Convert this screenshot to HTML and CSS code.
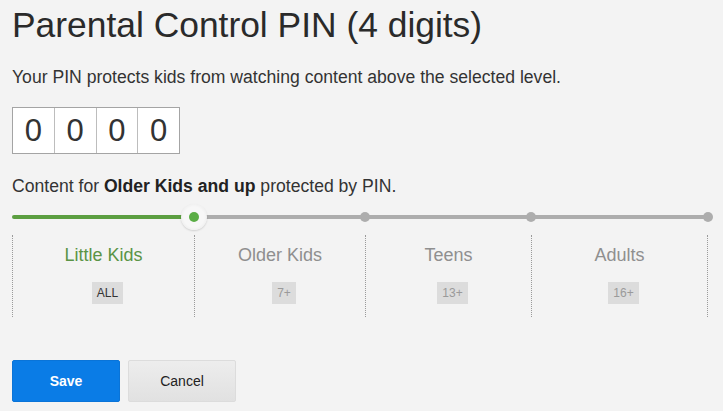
FILE: index.html
```html
<!DOCTYPE html>
<html lang="en">
<head>
	<meta charset="UTF-8">
	<title>Parental Control PIN</title>
	<link rel="stylesheet" href="styles.css">
</head>
<body>
	<h1 class="title">Parental Control PIN (4 digits)</h1>
	<p class="intro">Your PIN protects kids from watching content above the selected level.</p>

	<div class="pin">
		<span class="digit">0</span>
		<span class="digit">0</span>
		<span class="digit">0</span>
		<span class="digit">0</span>
	</div>

	<p class="status">Content for <b>Older Kids and up</b> protected by PIN.</p>

	<!--每一段对应下面一列  点放在段的末尾-->
	<div class="slider">
		<div class="seg on"><span class="knob"></span></div>
		<div class="seg"><span class="dot"></span></div>
		<div class="seg"><span class="dot"></span></div>
		<div class="seg"><span class="dot"></span></div>
	</div>

	<ul class="levels">
		<li class="on">
			<span class="name">Little Kids</span>
			<span class="badge">ALL</span>
		</li>
		<li>
			<span class="name">Older Kids</span>
			<span class="badge">7+</span>
		</li>
		<li>
			<span class="name">Teens</span>
			<span class="badge">13+</span>
		</li>
		<li>
			<span class="name">Adults</span>
			<span class="badge">16+</span>
		</li>
	</ul>

	<div class="actions">
		<button class="btn save">Save</button>
		<button class="btn cancel">Cancel</button>
	</div>
</body>
</html>
```

FILE: styles.css
```css
*{
	margin: 0;
	padding: 0;
	list-style: none;
	box-sizing: border-box;
}
body{
	background: #f3f3f3;
	padding: 0 12px;
	font-family: "Liberation Sans", Arial, sans-serif;
	color: #333;
}
.title{
	margin-top: 5px;
	font-size: 35.4px;
	line-height: 40px;
	font-weight: normal;
	color: #2a2a2a;
}
.intro{
	margin-top: 22px;
	font-size: 17.6px;
	line-height: 20px;
}
.pin{
	display: flex;
	width: 168px;
	margin-top: 20px;
	border: 1px solid #a4a4a4;
	background: #fff;
}
.pin .digit{
	flex: 1;
	height: 45px;
	line-height: 45px;
	text-align: center;
	font-size: 31px;
	color: #333;
	border-left: 1px solid #bdbdbd;
}
.pin .digit:first-child{
	border-left: none;
}
.status{
	margin-top: 22px;
	font-size: 17.6px;
	line-height: 20px;
}
.status b{
	color: #222;
}

/* 滑块 */
.slider{
	display: grid;
	grid-template-columns: 182px 171px 166px 177px;
	height: 26px;
	margin-top: 8px;
	align-items: center;
}
.seg{
	position: relative;
	height: 4px;
	background: #adadad;
}
.seg:first-child{
	border-radius: 2px 0 0 2px;
}
.seg.on{
	background: #5b9e40;
}
.seg .dot{
	position: absolute;
	right: -5px;
	top: -3px;
	width: 10px;
	height: 10px;
	border-radius: 50%;
	background: #adadad;
}
.seg .knob{
	position: absolute;
	right: -13px;
	top: -11px;
	width: 26px;
	height: 26px;
	border-radius: 50%;
	background: radial-gradient(circle, #f7f7f7 55%, #e4e4e4 100%);
	box-shadow: 0 1px 2px rgba(0,0,0,0.15);
	z-index: 1;
}
.seg .knob:after{
	content: "";
	position: absolute;
	left: 8px;
	top: 8px;
	width: 10px;
	height: 10px;
	border-radius: 50%;
	background: #5aad45;
}

/* 级别 */
.levels{
	display: grid;
	grid-template-columns: 182px 171px 166px 177px;
	margin-top: 5px;
	height: 82px;
}
.levels li{
	display: flex;
	flex-direction: column;
	align-items: center;
	padding-top: 9px;
	border-left: 1px dotted #9a9a9a;
}
.levels li:last-child{
	border-right: 1px dotted #9a9a9a;
}
.levels .name{
	font-size: 18px;
	line-height: 22px;
	color: #8f8f8f;
}
.levels .on .name{
	color: #5a9446;
}
.levels .badge{
	margin: 16px 0 0 8px;
	padding: 0 5px;
	height: 22px;
	line-height: 22px;
	font-size: 12px;
	background: #dcdcdc;
	color: #9a9a9a;
}
.levels .on .badge{
	color: #333;
}

/* 按钮 */
.actions{
	display: flex;
	gap: 8px;
	margin-top: 43px;
}
.btn{
	width: 108px;
	height: 42px;
	font-family: "Liberation Sans", Arial, sans-serif;
	font-size: 14px;
	border-radius: 2px;
	cursor: pointer;
}
.save{
	background: #0a7ce6;
	border: 1px solid #0a74d8;
	color: #fff;
	font-weight: bold;
}
.cancel{
	background: linear-gradient(#ededed, #e1e1e1);
	border: 1px solid #dcdcdc;
	color: #222;
}
```
